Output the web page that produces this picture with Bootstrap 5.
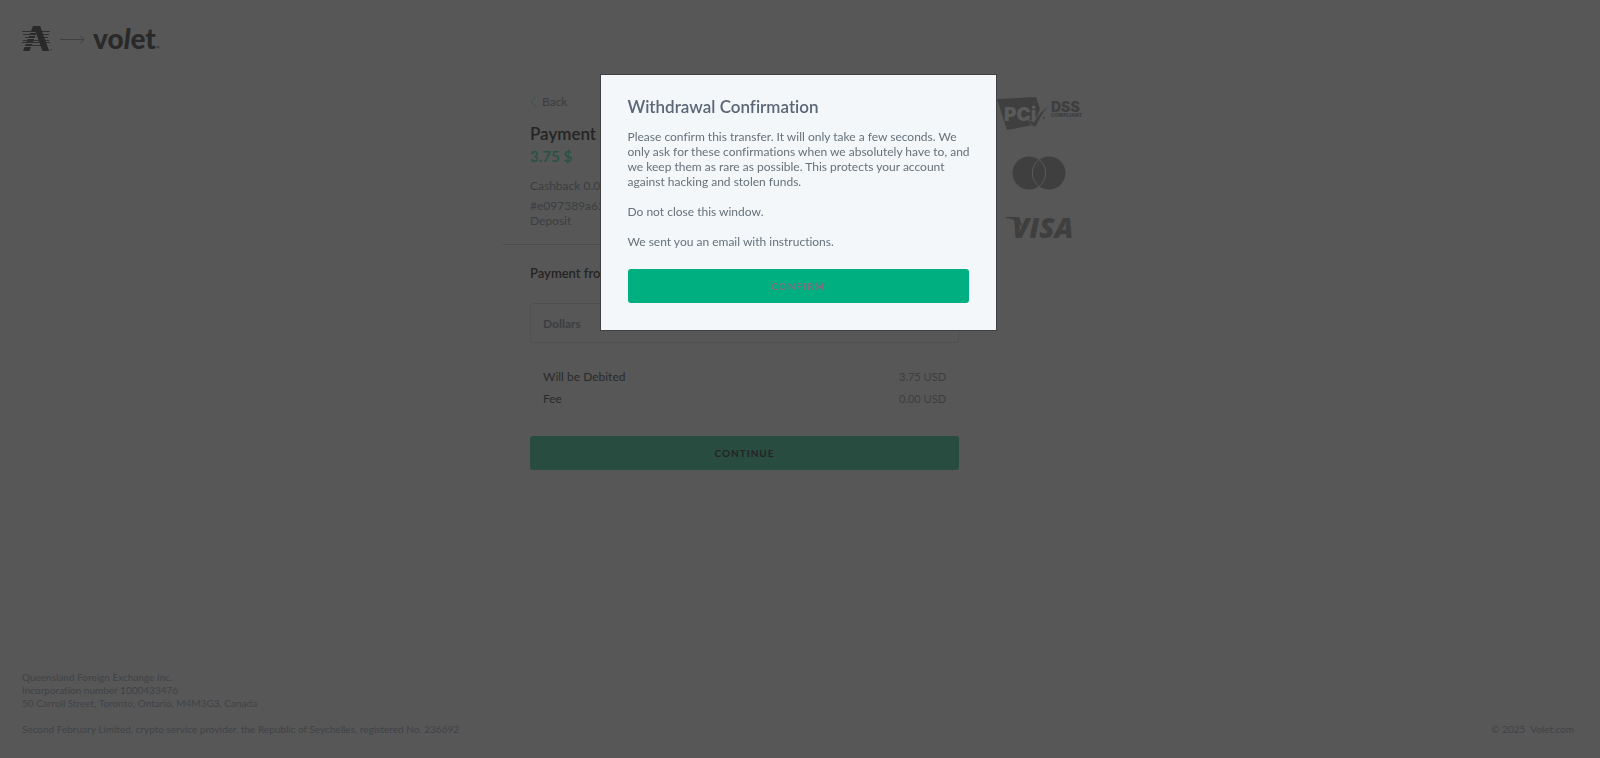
<!DOCTYPE html>
<html lang="en">
<head>
<meta charset="utf-8">
<meta name="viewport" content="width=device-width, initial-scale=1">
<title>Withdrawal Confirmation</title>
<link href="https://cdn.jsdelivr.net/npm/bootstrap@5.3.0/dist/css/bootstrap.min.css" rel="stylesheet">
<style>
body{background:#575757;color:#3b3e41;font-family:Lato,"Open Sans",sans-serif;font-size:12px;line-height:15px;padding-right:4px;font-variant-ligatures:none}
a{color:inherit;text-decoration:none}
.brand-bar{padding:26px 22px 0}
.brand-word{font-size:28px;line-height:24px;font-weight:900;color:#292929;padding-bottom:2px}
.shell{width:100%;max-width:590px;margin-top:32px;border-bottom:1px solid #555756}
.pay-col{min-width:0}
.pay-head{padding:10px 26px 16px 27px;border-bottom:1px solid #4b4d4d}
.pay-body{padding:20px 26px 28px 27px}
.sum-title{font-size:17px;line-height:23px;font-weight:600;color:#242424}
.back-link{margin-bottom:13px}
.amount{color:#265244;font-size:15px}
.cashback{margin:10px 0 5px}
.section-title{font-size:13px;line-height:16px;font-weight:600;color:#242424;margin-bottom:22px}
.account{height:40px;background:#575757;border:1px solid #4f5051;border-radius:3px;color:#3b3e41;font-size:12px;font-weight:700;padding:0 13px 0 12px;appearance:none;width:100%}
.totals{margin:23px 0 26px}
.totals th,.totals td{padding:2px 13px;line-height:18px;font-weight:400}
.totals th{color:#292b2d}
.totals td{text-align:right;font-size:11px}
.wide-btn{height:34px;width:100%;border:0;border-radius:3px;font-size:10px;line-height:14px;font-weight:700;letter-spacing:1px;padding:0}
.continue{background:#294c41;color:#242424}
.confirm{background:#00af80;color:#7d6c82}
.seals{width:108px;padding-top:13px;gap:25px}
.seals svg{overflow:visible}
.legal{font-size:10px;line-height:13px;padding:0 22px 22px;color:#3f4347}
.veil{padding:75px 4px 0 0;z-index:10}
.dialog{width:100%;max-width:395px;background:#f3f7fa;color:#66717b;padding:21px 21px 27px 27px;box-shadow:0 0 0 1px #404040}
.dialog h1{font-size:17px;line-height:21px;font-weight:600;color:#5b6776;margin:0 0 12px}
.dialog p{margin:0 0 15px}
.dialog-action{padding:5px 6px 0 0}
</style>
</head>
<body>
<div class="d-flex flex-column min-vh-100">
  <header class="brand-bar d-flex align-items-center">
    <svg width="30" height="26" viewBox="0 0 30 26" aria-hidden="true">
      <path fill="#292929" d="M11 0h7l9 25h-6.500L14.500 7 7.500 25H1z"/>
      <path d="M0 6.500h28M1 9.500h26M2 12.500h24M2 17.500h24M1 20.500h26" stroke="#575757"/>
      <path d="M0 5.500h10M19 5.500h9M1 8.500h9M20 8.500h7M3 11.500h6M21 11.500h5M1 14.500h26M0 16.500h28M3 19.500h22" stroke="#303030"/>
      <path fill="#292929" d="M11 0h7l9 25h-6.500L13 4z"/>
      <circle cx="29" cy="24" r="1" fill="#444"/>
    </svg>
    <svg class="ms-2" width="25" height="10" viewBox="0 0 25 10" fill="none" stroke="#404040" aria-hidden="true"><path d="M0 5.500h24M20 1.500l4 4-4 4"/></svg>
    <a href="#" class="brand-word ms-2">vo<i>l</i>et<svg class="align-baseline" width="4" height="4" viewBox="0 0 4 4" aria-hidden="true"><circle cx="2" cy="2" r="1.500" fill="#424242"/></svg></a>
  </header>
  <main class="shell mx-auto d-flex">
    <div class="pay-col flex-grow-1">
      <section class="pay-head">
        <a href="#" class="back-link d-flex align-items-center"><svg width="8" height="12" viewBox="0 0 8 12" fill="none" stroke="#2b5a4a" aria-hidden="true"><path d="M6 1L1 6l5 5"/></svg><span class="ms-1">Back</span></a>
        <div class="sum-title">Payment</div>
        <div class="sum-title amount">3.75 $</div>
        <div class="cashback">Cashback 0.02</div>
        <div>#e097389a623</div>
        <div>Deposit</div>
      </section>
      <section class="pay-body">
        <label for="account" class="section-title d-block">Payment from</label>
        <select id="account" class="account d-block"><option>Dollars</option></select>
        <table class="totals w-100">
          <tr><th scope="row">Will be Debited</th><td>3.75 USD</td></tr>
          <tr><th scope="row">Fee</th><td>0.00 USD</td></tr>
        </table>
        <button type="button" class="wide-btn continue">CONTINUE</button>
      </section>
    </div>
    <aside class="seals d-flex flex-column align-items-center flex-shrink-0">
      <svg width="90" height="34" viewBox="0 0 90 34" role="img" aria-label="PCI DSS compliant">
        <path fill="#3f3f3f" d="M3 2l39-2 4 12-7 16-26 5z"/>
        <g font-family="Inter, sans-serif" font-weight="900"><text x="10" y="24" font-size="19" fill="#5a5a5a">PCi</text>
        <text x="57" y="15" font-size="14" fill="#3f3f3f">DSS</text><text x="57" y="20" font-size="5" fill="#3f3f3f">COMPLIANT</text></g>
        <path d="M34 22l6 3C43 19 48 13 56 8C50 14 46 21 42 30C39 30 36 27 34 22z" fill="#3f3f3f" stroke="#575757" stroke-width="1"/><circle cx="50" cy="21" r="1" fill="#3f3f3f"/>
      </svg>
      <svg width="54" height="34" viewBox="0 0 54 34" role="img" aria-label="Mastercard">
        <circle cx="17" cy="17" r="16.500" fill="#3f3f3f"/><circle cx="37" cy="17" r="16.500" fill="#3f3f3f"/>
        <path d="M27 3.500a17 17 0 0 1 0 27a17 17 0 0 1 0-27z" fill="#3f3f3f" stroke="#5a5a5a"/>
      </svg>
      <svg width="80" height="34" viewBox="0 0 80 34" role="img" aria-label="Visa">
        <path d="M7 2h13l4 11C20 7 15 4 7 3z" fill="#3f3f3f"/>
        <text x="13" y="23" font-family="Open Sans, sans-serif" font-weight="800" font-style="italic" font-size="28" fill="#3f3f3f">VISA</text>
      </svg>
    </aside>
  </main>
  <footer class="legal d-flex justify-content-between align-items-end mt-auto">
    <div>Queensland Foreign Exchange Inc.<br>Incorporation number 1000433476<br>50 Carroll Street, Toronto, Ontario, M4M3G3, Canada<br><br>Second February Limited, crypto service provider, the Republic of Seychelles, registered No. 236692</div>
    <div>© 2025 &nbsp;<a href="#">Volet.com</a></div>
  </footer>
</div>
<div class="veil position-fixed top-0 start-0 w-100 h-100">
  <div class="dialog mx-auto" role="dialog" aria-modal="true" aria-labelledby="dialog-title">
    <h1 id="dialog-title">Withdrawal Confirmation</h1>
    <p>Please confirm this transfer. It will only take a few seconds. We only ask for these confirmations when we absolutely have to, and we keep them as rare as possible. This protects your account against hacking and stolen funds.</p>
    <p>Do not close this window.</p>
    <p>We sent you an email with instructions.</p>
    <div class="dialog-action"><button type="button" class="wide-btn confirm">CONFIRM</button></div>
  </div>
</div>
<script src="https://cdn.jsdelivr.net/npm/bootstrap@5.3.0/dist/js/bootstrap.bundle.min.js"></script>
</body>
</html>
